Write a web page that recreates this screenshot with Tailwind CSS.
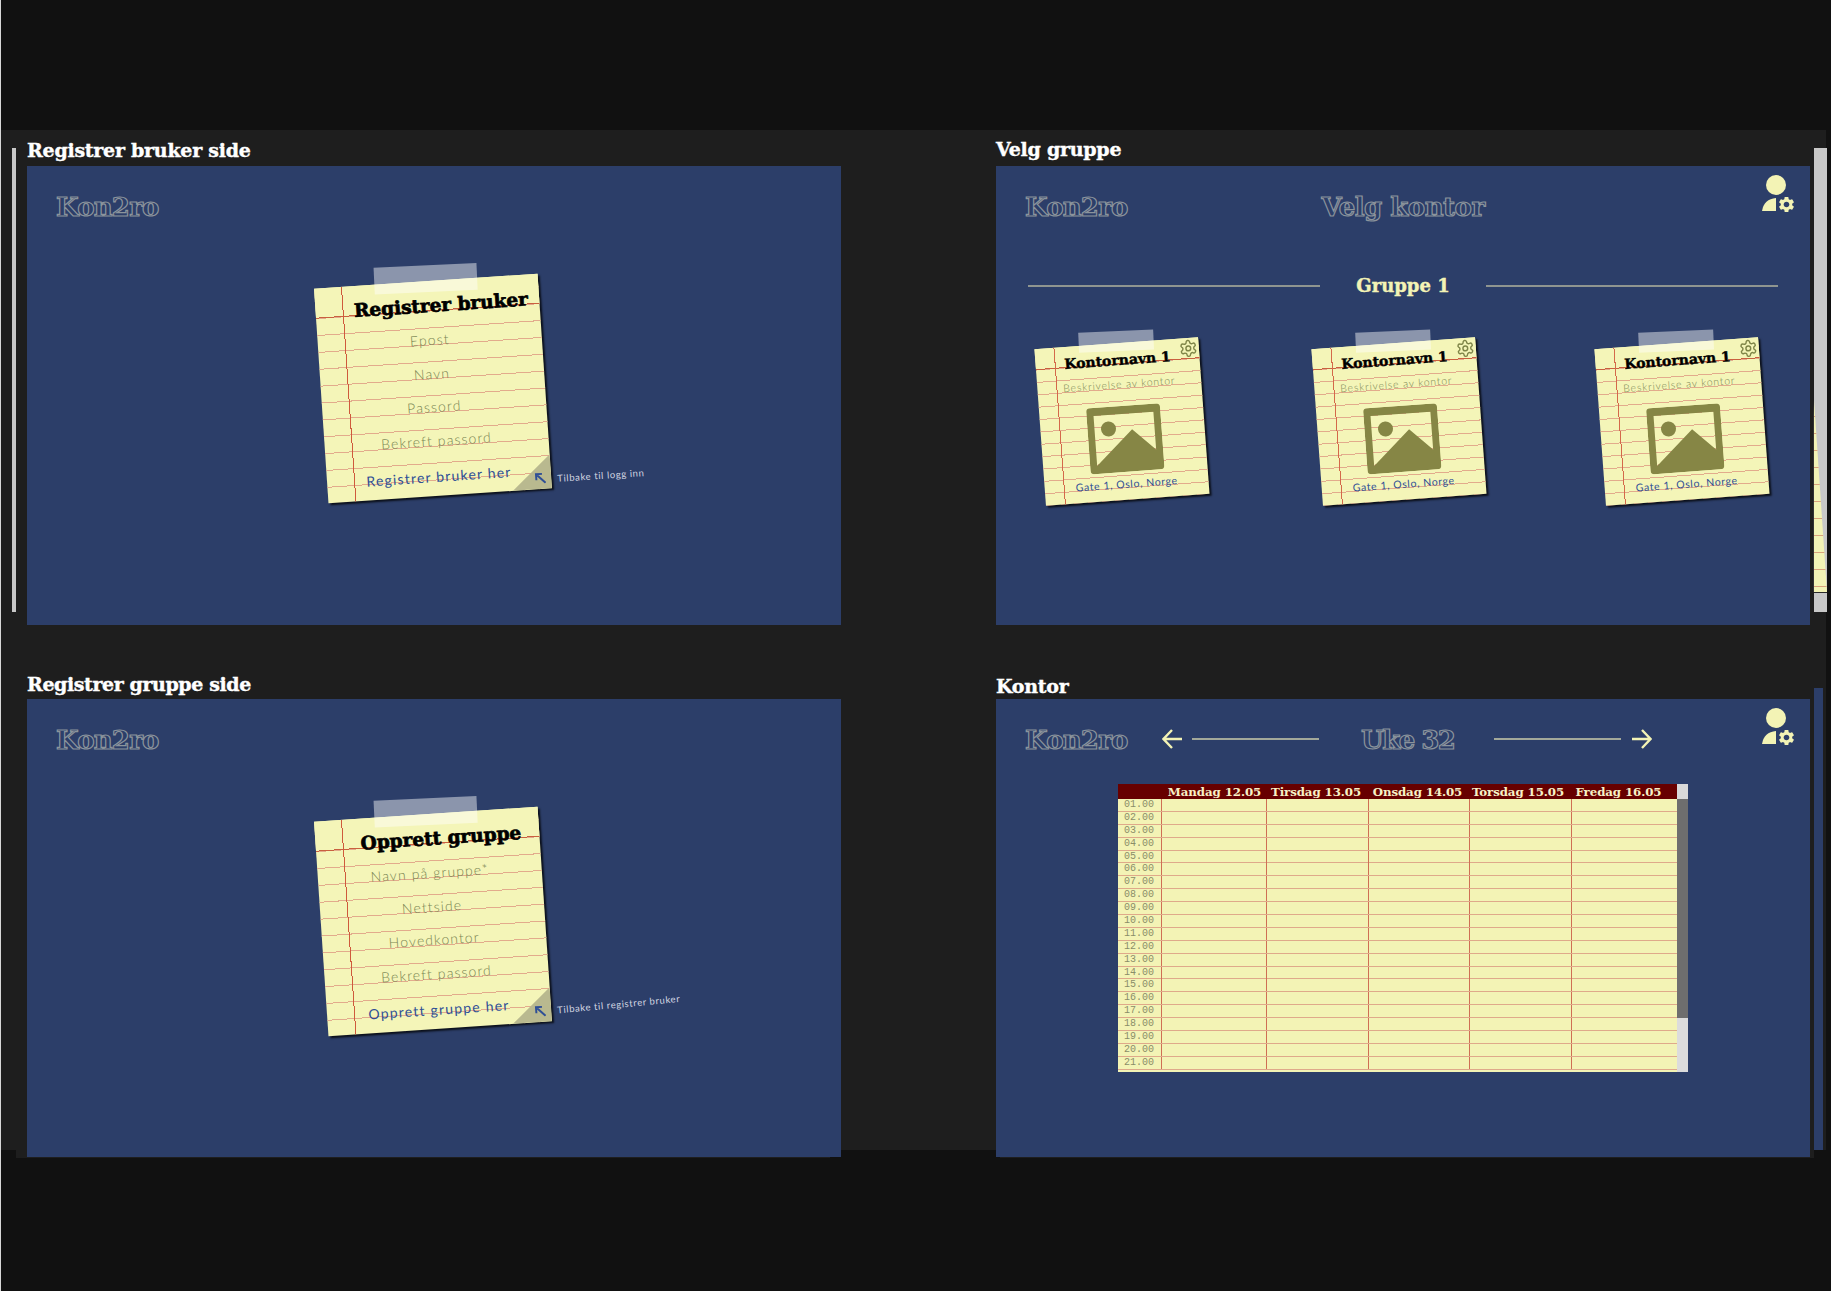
<!DOCTYPE html>
<html lang="en">
  <head>
    <meta charset="UTF-8" />
    <meta name="viewport" content="width=device-width, initial-scale=1.0" />
    <title>Kon2ro skisser</title>
    <script src="https://cdn.jsdelivr.net/npm/@tailwindcss/browser@4"></script>
  </head>
  <body class="relative w-[1831px] h-[1291px] overflow-hidden bg-[#111111] border-l border-[#d8d8d8] font-['DejaVu_Serif',serif]">
    <div class="relative mt-[130px] h-[1020px] w-[1826px] -ml-px bg-[#1e1e1e] pl-[27px]">
      <!-- page scrollbars -->
      <div class="absolute left-[12px] top-[18px] w-[4px] h-[464px] bg-[#c8c8c8]"></div>
      <div class="absolute left-[1814px] top-[18px] w-[13px] h-[464px] bg-[#c8c8c8]">
        <div class="absolute left-0 top-[252px] w-[13px] h-[192px] drop-shadow-[-1px_0_0_#333333]">
          <div class="w-[13px] h-[192px] bg-[#f3f3b5] bg-[repeating-linear-gradient(180deg,transparent_0,transparent_16px,#d9a27c_16px,#d9a27c_17px)] [clip-path:polygon(0_0,100%_100%,0_100%)]"></div>
        </div>
        <div class="absolute left-0 top-[444px] w-[13px] h-px bg-[#2a2a2a]"></div>
      </div>
      <div class="absolute left-[1814px] top-[558px] w-[9px] h-[462px] bg-[#2c3e69]"></div>

      <div class="grid grid-cols-[814px_814px] gap-x-[155px] gap-y-[38px]">
        <!-- Registrer bruker side -->
        <section>
          <h2 class="h-[36px] pt-[9px] text-[19px] leading-[22px] font-bold tracking-[-0.25px] text-white [-webkit-text-stroke:0.4px_#fff]">Registrer bruker side</h2>
          <div class="flex flex-col h-[459px] bg-[#2c3e69]">
            <header class="flex items-center h-[80px] pt-[3px] pl-[29px]">
              <span class="text-[26px] font-bold tracking-[-0.8px] text-[#2c3e69] [-webkit-text-stroke:1.2px_#8b949c]">Kon2ro</span>
            </header>
            <div class="relative self-center mt-[35px] -ml-[3px] w-[224px] h-[215px] rotate-[-3.85deg] bg-[#f4f5b8] shadow-[2px_2px_2px_rgba(0,0,0,0.75)] bg-[linear-gradient(90deg,transparent_27px,#cf5a3c_27px,#cf5a3c_28px,transparent_28px),linear-gradient(180deg,transparent_29px,#c9603f_29px,#c9603f_30px,transparent_30px),linear-gradient(180deg,#f4f5b8_30px,transparent_30px),repeating-linear-gradient(180deg,transparent_0,transparent_12.6px,#e2ab8c_12.6px,#e2ab8c_13.6px,transparent_13.6px,transparent_16.9px)]">
              <div class="absolute left-1/2 -top-[16px] w-[103px] h-[27px] -translate-x-1/2 rotate-[1.2deg] bg-white/45"></div>
              <h3 class="relative pt-[13px] pb-[2px] pl-[27px] text-center text-[18.500px] leading-[24px] font-bold text-black [-webkit-text-stroke:0.7px_#000]">Registrer bruker</h3>
              <div class="flex flex-col items-center pt-[3px] font-['Lato',sans-serif] font-light text-[14px] tracking-[1.1px] text-[#7a8552]">
                <p class="flex items-center h-[33.5px]">Epost</p>
                <p class="flex items-center h-[33.5px]">Navn</p>
                <p class="flex items-center h-[33.5px]">Passord</p>
                <p class="flex items-center h-[33.5px]">Bekreft passord</p>
                <a class="flex items-center h-[33.5px] mt-[3px] font-normal text-[#2f4f96] tracking-[1.200px]">Registrer bruker her</a>
              </div>
              <div class="absolute right-0 bottom-0 w-[39px] h-[34px] bg-[#b9b98f] [clip-path:polygon(100%_0,100%_100%,0_100%)]"></div>
              <svg class="absolute left-[207px] top-[198px] w-[12px] h-[12px]" viewBox="0 0 12 12" fill="none" stroke="#2f4f96" stroke-width="2"><path d="M11 11 2 2M2 8V2h6" /></svg>
              <a class="absolute left-[230px] top-[200px] whitespace-nowrap font-['Lato',sans-serif] text-[9.5px] leading-[12px] tracking-[0.6px] text-[#d3d7e2]">Tilbake til logg inn</a>
            </div>
          </div>
        </section>

        <!-- Velg gruppe -->
        <section>
          <h2 class="h-[36px] pt-[8px] text-[19px] leading-[22px] font-bold tracking-[-0.25px] text-white [-webkit-text-stroke:0.4px_#fff]">Velg gruppe</h2>
          <div class="flex flex-col h-[459px] bg-[#2c3e69]">
            <header class="grid grid-cols-[1fr_auto_1fr] items-center h-[80px] pt-[3px] px-[29px]">
              <span class="text-[26px] font-bold tracking-[-0.8px] text-[#2c3e69] [-webkit-text-stroke:1.2px_#8b949c]">Kon2ro</span>
              <span class="text-[26px] font-bold tracking-[-0.5px] text-[#2c3e69] [-webkit-text-stroke:1.2px_#8b949c]">Velg kontor</span>
              <svg class="justify-self-end self-start mt-[6px] -mr-[15px] w-[34px] h-[39px]" viewBox="0 0 34 39" fill="#f3f3b5">
                <circle cx="14" cy="10" r="10" />
                <path d="M0 36Q2 24 14 23V36Z" />
                <svg x="15" y="20" width="19" height="19" viewBox="0 0 24 24"><path d="M19.14 12.94c.04-.3.06-.61.06-.94 0-.32-.02-.64-.07-.94l2.03-1.58a.49.49 0 0 0 .12-.61l-1.92-3.32a.488.488 0 0 0-.59-.22l-2.39.96c-.5-.38-1.03-.7-1.62-.94l-.36-2.54a.484.484 0 0 0-.48-.41h-3.84c-.24 0-.43.17-.47.41l-.36 2.54c-.59.24-1.13.57-1.62.94l-2.39-.96c-.22-.08-.47 0-.59.22L2.74 8.87c-.12.21-.08.47.12.61l2.03 1.58c-.05.3-.09.63-.09.94s.02.64.07.94l-2.03 1.58a.49.49 0 0 0-.12.61l1.92 3.32c.12.22.37.29.59.22l2.39-.96c.5.38 1.03.7 1.62.94l.36 2.54c.05.24.24.41.48.41h3.84c.24 0 .44-.17.47-.41l.36-2.54c.59-.24 1.13-.56 1.62-.94l2.39.96c.22.08.47 0 .59-.22l1.92-3.32c.12-.22.07-.47-.12-.61l-2.01-1.58zM12 15.6c-1.98 0-3.6-1.62-3.6-3.6s1.62-3.6 3.6-3.6 3.6 1.62 3.6 3.6-1.62 3.6-3.6 3.6z" /></svg>
              </svg>
            </header>
            <div class="flex items-center h-[30px] mt-[25px] px-[32px]">
              <div class="flex-1 h-[2px] bg-[#8f9590]"></div>
              <h3 class="w-[166px] -mt-px text-center text-[18px] font-bold text-[#f3f3b5] [-webkit-text-stroke:0.4px_#f3f3b5]">Gruppe 1</h3>
              <div class="flex-1 h-[2px] bg-[#8f9590]"></div>
            </div>
            <div id="offices" class="flex mt-[42px] pl-[44px]"></div>
          </div>
        </section>

        <!-- Registrer gruppe side -->
        <section>
          <h2 class="h-[36px] pt-[10px] text-[19px] leading-[22px] font-bold tracking-[-0.4px] text-white [-webkit-text-stroke:0.4px_#fff]">Registrer gruppe side</h2>
          <div class="flex flex-col h-[458px] bg-[#2c3e69] shadow-[-11px_1px_0_#1e1e1e]">
            <header class="flex items-center h-[80px] pt-[3px] pl-[29px]">
              <span class="text-[26px] font-bold tracking-[-0.8px] text-[#2c3e69] [-webkit-text-stroke:1.2px_#8b949c]">Kon2ro</span>
            </header>
            <div class="relative self-center mt-[35px] -ml-[3px] w-[224px] h-[215px] rotate-[-3.85deg] bg-[#f4f5b8] shadow-[2px_2px_2px_rgba(0,0,0,0.75)] bg-[linear-gradient(90deg,transparent_27px,#cf5a3c_27px,#cf5a3c_28px,transparent_28px),linear-gradient(180deg,transparent_29px,#c9603f_29px,#c9603f_30px,transparent_30px),linear-gradient(180deg,#f4f5b8_30px,transparent_30px),repeating-linear-gradient(180deg,transparent_0,transparent_12.6px,#e2ab8c_12.6px,#e2ab8c_13.6px,transparent_13.6px,transparent_16.9px)]">
              <div class="absolute left-1/2 -top-[16px] w-[103px] h-[27px] -translate-x-1/2 rotate-[1.2deg] bg-white/45"></div>
              <h3 class="relative pt-[13px] pb-[2px] pl-[27px] text-center text-[18.500px] leading-[24px] font-bold text-black [-webkit-text-stroke:0.7px_#000]">Opprett gruppe</h3>
              <div class="flex flex-col items-center pt-[3px] font-['Lato',sans-serif] font-light text-[14px] tracking-[1.1px] text-[#7a8552]">
                <p class="flex items-center h-[33.5px]">Navn på gruppe*</p>
                <p class="flex items-center h-[33.5px]">Nettside</p>
                <p class="flex items-center h-[33.5px]">Hovedkontor</p>
                <p class="flex items-center h-[33.5px]">Bekreft passord</p>
                <a class="flex items-center h-[33.5px] mt-[3px] font-normal text-[#2f4f96] tracking-[1.200px]">Opprett gruppe her</a>
              </div>
              <div class="absolute right-0 bottom-0 w-[39px] h-[34px] bg-[#b9b98f] [clip-path:polygon(100%_0,100%_100%,0_100%)]"></div>
              <svg class="absolute left-[207px] top-[198px] w-[12px] h-[12px]" viewBox="0 0 12 12" fill="none" stroke="#2f4f96" stroke-width="2"><path d="M11 11 2 2M2 8V2h6" /></svg>
              <a class="absolute left-[230px] top-[197px] rotate-[-1.5deg] whitespace-nowrap font-['Lato',sans-serif] text-[9.5px] leading-[12px] tracking-[0.6px] text-[#d3d7e2]">Tilbake til registrer bruker</a>
            </div>
          </div>
        </section>

        <!-- Kontor -->
        <section>
          <h2 class="h-[36px] pt-[12px] text-[19px] leading-[22px] font-bold tracking-[-0.25px] text-white [-webkit-text-stroke:0.4px_#fff]">Kontor</h2>
          <div class="flex flex-col h-[458px] bg-[#2c3e69] shadow-[4px_1px_0_#1e1e1e]">
            <header class="flex items-center h-[80px] pt-[3px] pl-[29px] pr-[14px] text-[#f3f3b5]">
              <span class="w-[137px] shrink-0 text-[26px] font-bold tracking-[-0.8px] text-[#2c3e69] [-webkit-text-stroke:1.2px_#8b949c]">Kon2ro</span>
              <svg class="mb-[4px] w-[21px] h-[20px]" viewBox="0 0 21 20" fill="none" stroke="currentColor" stroke-width="2.4"><path d="M20 10H2M10 1 1.5 10l8.5 9" /></svg>
              <div class="mb-[4px] ml-[9px] w-[127px] h-[2px] bg-[#a3a89a]"></div>
              <span class="ml-[42px] w-[93px] text-center whitespace-nowrap text-[26px] font-bold tracking-[-1.5px] text-[#2c3e69] [-webkit-text-stroke:1.2px_#8b949c]">Uke 32</span>
              <div class="mb-[4px] ml-[40px] w-[127px] h-[2px] bg-[#a3a89a]"></div>
              <svg class="mb-[4px] ml-[10px] w-[21px] h-[20px]" viewBox="0 0 21 20" fill="none" stroke="currentColor" stroke-width="2.4"><path d="M1 10h18M11 1l8.500 9L11 19" /></svg>
              <svg class="self-start mt-[6px] ml-auto w-[34px] h-[39px]" viewBox="0 0 34 39" fill="#f3f3b5">
                <circle cx="14" cy="10" r="10" />
                <path d="M0 36Q2 24 14 23V36Z" />
                <svg x="15" y="20" width="19" height="19" viewBox="0 0 24 24"><path d="M19.14 12.94c.04-.3.06-.61.06-.94 0-.32-.02-.64-.07-.94l2.03-1.58a.49.49 0 0 0 .12-.61l-1.92-3.32a.488.488 0 0 0-.59-.22l-2.39.96c-.5-.38-1.03-.7-1.62-.94l-.36-2.54a.484.484 0 0 0-.48-.41h-3.84c-.24 0-.43.17-.47.41l-.36 2.54c-.59.24-1.13.57-1.62.94l-2.39-.96c-.22-.08-.47 0-.59.22L2.74 8.87c-.12.21-.08.47.12.61l2.03 1.58c-.05.3-.09.63-.09.94s.02.64.07.94l-2.03 1.58a.49.49 0 0 0-.12.61l1.92 3.32c.12.22.37.29.59.22l2.39-.96c.5.38 1.03.7 1.62.94l.36 2.54c.05.24.24.41.48.41h3.84c.24 0 .44-.17.47-.41l.36-2.54c.59-.24 1.13-.56 1.62-.94l2.39.96c.22.08.47 0 .59-.22l1.92-3.32c.12-.22.07-.47-.12-.61l-2.01-1.58zM12 15.6c-1.98 0-3.6-1.62-3.6-3.6s1.62-3.6 3.6-3.6 3.6 1.62 3.6 3.6-1.62 3.6-3.6 3.6z" /></svg>
              </svg>
            </header>
            <div class="flex self-center mt-[5px] w-[570px] h-[288px]">
              <div class="w-[559px] bg-[#f3f3b5]">
                <div class="grid grid-cols-[44px_105px_102px_101px_102px_105px] h-[15px] bg-[#670000] text-center text-[11.8px] leading-[16px] font-bold tracking-[-0.1px] text-[#f7f1c6]">
                  <span></span><span>Mandag 12.05</span><span class="pr-[4px]">Tirsdag 13.05</span><span class="pr-[4px]">Onsdag 14.05</span><span class="pr-[6px]">Torsdag 15.05</span><span class="pr-[12px]">Fredag 16.05</span>
                </div>
                <div id="week"></div>
              </div>
              <div class="flex flex-col w-[11px]">
                <div class="h-[15px] bg-[#d9d9d9]"></div>
                <div class="h-[219px] bg-[#6e6e6e]"></div>
                <div class="flex-1 bg-[#dcdcdc]"></div>
              </div>
            </div>
          </div>
        </section>
      </div>
    </div>
    <script>
      const gaps = [0, 113, 119]
      document.getElementById('offices').innerHTML = gaps
        .map(
          (gap) => `
          <article style="margin-left:${gap}px" class="relative shrink-0 flex flex-col items-center w-[164px] h-[157px] rotate-[-4.2deg] bg-[#f4f5b8] shadow-[2px_2px_2px_rgba(0,0,0,0.75)] bg-[linear-gradient(90deg,transparent_19px,#d4694a_19px,#d4694a_20px,transparent_20px),linear-gradient(180deg,transparent_20px,#c9603f_20px,#c9603f_21px,transparent_21px),linear-gradient(180deg,#f4f5b8_21px,transparent_21px),repeating-linear-gradient(180deg,transparent_0,transparent_8px,#e2ab8c_8px,#e2ab8c_9px,transparent_9px,transparent_12.4px)]">
            <div class="absolute left-1/2 -top-[12px] w-[75px] h-[20px] -translate-x-1/2 rotate-[1.7deg] bg-white/45"></div>
            <svg class="absolute left-[144px] top-[1px] w-[19px] h-[19px]" viewBox="0 0 24 24" fill="none" stroke="#7f8548" stroke-width="1.8"><path d="M12.22 2h-.44a2 2 0 0 0-2 2v.18a2 2 0 0 1-1 1.73l-.43.25a2 2 0 0 1-2 0l-.15-.08a2 2 0 0 0-2.73.73l-.22.38a2 2 0 0 0 .73 2.730l.15.1a2 2 0 0 1 1 1.72v.51a2 2 0 0 1-1 1.74l-.15.09a2 2 0 0 0-.73 2.73l.22.38a2 2 0 0 0 2.73.73l.15-.08a2 2 0 0 1 2 0l.43.25a2 2 0 0 1 1 1.73V20a2 2 0 0 0 2 2h.44a2 2 0 0 0 2-2v-.18a2 2 0 0 1 1-1.73l.43-.25a2 2 0 0 1 2 0l.15.08a2 2 0 0 0 2.73-.73l.22-.39a2 2 0 0 0-.73-2.73l-.15-.08a2 2 0 0 1-1-1.74v-.5a2 2 0 0 1 1-1.74l.15-.09a2 2 0 0 0 .73-2.73l-.22-.38a2 2 0 0 0-2.73-.73l-.15.08a2 2 0 0 1-2 0l-.43-.25a2 2 0 0 1-1-1.73V4a2 2 0 0 0-2-2z" /><circle cx="12" cy="12" r="3" /></svg>
            <h4 class="relative mt-[8px] mb-[2px] text-[14px] leading-[18px] font-bold text-black [-webkit-text-stroke:0.4px_#000]">Kontornavn 1</h4>
            <p class="h-[18px] mt-[4px] font-['Lato',sans-serif] font-light text-[10.5px] leading-[18px] tracking-[0.8px] text-[#7a8552]">Beskrivelse av kontor</p>
            <svg class="mt-[13px] ml-[4px] w-[74px] h-[66px]" viewBox="0 0 74 66" fill="#868645"><path fill-rule="evenodd" d="M4 0H70a4 4 0 0 1 4 4V62a4 4 0 0 1-4 4H4a4 4 0 0 1-4-4V4a4 4 0 0 1 4-4ZM7 8V58L44.500 24 67 46V8Z" /><circle cx="21" cy="22" r="7.500" /></svg>
            <p class="h-[18px] mt-[3px] font-['Lato',sans-serif] text-[10.5px] leading-[18px] tracking-[0.6px] text-[#2f4f96]">Gate 1, Oslo, Norge</p>
          </article>`
        )
        .join('')

      const hours = []
      for (let h = 1; h <= 21; h++) {
        hours.push(`
          <div class="grid grid-cols-[44px_105px_102px_101px_102px_105px] h-[12.9px] border-b border-[#dfa98a]">
            <span class="border-r border-[#cf6f54] pl-[6px] font-['Liberation_Mono',monospace] text-[10px] leading-[12px] text-[#8a8e68]">${String(h).padStart(2, '0')}.00</span>
            <span class="border-r border-[#cf6f54]"></span>
            <span class="border-r border-[#cf6f54]"></span>
            <span class="border-r border-[#cf6f54]"></span>
            <span class="border-r border-[#cf6f54]"></span>
            <span></span>
          </div>`)
      }
      document.getElementById('week').innerHTML = hours.join('')
    </script>
  </body>
</html>
